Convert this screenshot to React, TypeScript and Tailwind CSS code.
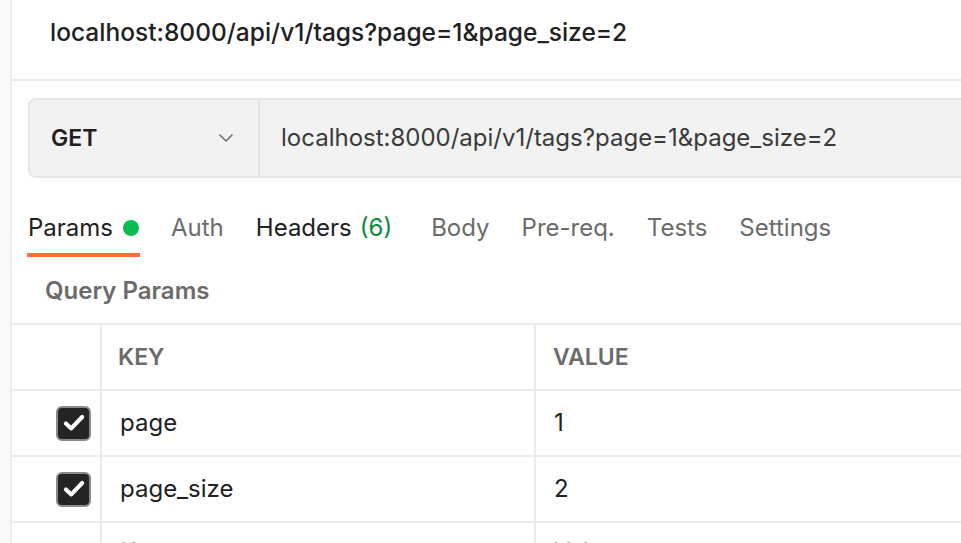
import { ChevronDown } from "lucide-react";

const tabs = [
  { label: "Params", active: true, dot: true },
  { label: "Auth" },
  { label: "Headers", count: "(6)", dark: true },
  { label: "Body" },
  { label: "Pre-req." },
  { label: "Tests" },
  { label: "Settings" },
];

const rows = [
  { key: "page", value: "1" },
  { key: "page_size", value: "2" },
];

function Check() {
  return (
    <div className="w-[35px] h-[35px] rounded-[6px] bg-[#242424] border-2 border-[#8a8a8a] flex items-center justify-center">
      <svg width="26" height="26" viewBox="0 0 24 24" fill="none">
        <path d="M4.5 12.5l5 4.5 10-10.5" stroke="#fff" strokeWidth="3.8" strokeLinecap="round" strokeLinejoin="round" />
      </svg>
    </div>
  );
}

function Row({ children }: { children: React.ReactNode }) {
  return <div className="flex h-[66px] shrink-0 border-b-2 border-[#ebebeb]">{children}</div>;
}

export default function App() {
  const url = "localhost:8000/api/v1/tags?page=1&page_size=2";

  return (
    <div className="h-[543px] w-[961px] overflow-hidden flex bg-white font-['Inter',sans-serif]">
      <div className="w-[12px] shrink-0 bg-[#f9f9f9] border-r-2 border-[#ececec]" />

      <div className="flex-1 min-w-0 flex flex-col">
        {/* Title */}
        <div className="h-[81px] shrink-0 border-b-2 border-[#ededed] flex items-center pl-[38px] pb-[14px]">
          <span className="text-[24.5px] font-medium text-[#212121] whitespace-nowrap">{url}</span>
        </div>

        {/* URL bar */}
        <div className="pl-[16px] pt-[17px] shrink-0">
          <div className="h-[80px] flex bg-[#f2f2f2] border-2 border-r-0 border-[#e6e6e6] rounded-l-[8px]">
            <div className="w-[230px] shrink-0 flex items-center justify-between pl-[21px] pr-[20px] border-r-2 border-[#e4e4e4]">
              <span className="text-[23px] font-semibold text-[#212121]">GET</span>
              <ChevronDown className="w-[24px] h-[24px] text-[#6b6b6b]" strokeWidth={1.5} />
            </div>
            <div className="flex items-center pl-[21px] text-[24px] text-[#3a3a3a] whitespace-nowrap">{url}</div>
          </div>
        </div>

        {/* Tabs */}
        <div className="flex items-start gap-[32px] pl-[16px] pt-[33px] shrink-0">
          {tabs.map((t) => (
            <div key={t.label} className="flex flex-col">
              <div className="flex items-center h-[34px] text-[24px] leading-none whitespace-nowrap">
                <span className={t.active || t.dark ? "text-[#212121]" : "text-[#6b6b6b]"}>{t.label}</span>
                {t.dot && <span className="ml-[10px] w-[16px] h-[16px] rounded-full bg-[#0cbb52]" />}
                {t.count && <span className="ml-[8px] mr-[7px] text-[#0c8a3c]">{t.count}</span>}
              </div>
              <div className={`h-[4px] mt-[8px] -mx-[1px] ${t.active ? "bg-[#ff6c37]" : ""}`} />
            </div>
          ))}
        </div>

        {/* Query params label */}
        <div className="h-[66px] shrink-0 flex items-center pl-[33px] pt-[1px] text-[24px] font-semibold text-[#6b6b6b]">
          Query Params
        </div>

        {/* Table */}
        <div className="border-t-2 border-[#ebebeb] flex flex-col">
          <Row>
            <div className="w-[90px] shrink-0 border-r-2 border-[#ebebeb]" />
            <div className="w-[434px] shrink-0 border-r-2 border-[#ebebeb] flex items-center pl-[16px] text-[23px] font-semibold text-[#6b6b6b]">
              KEY
            </div>
            <div className="flex-1 flex items-center pl-[17px] text-[23px] font-semibold text-[#6b6b6b]">VALUE</div>
          </Row>
          {rows.map((r) => (
            <Row key={r.key}>
              <div className="w-[90px] shrink-0 border-r-2 border-[#ebebeb] flex items-center justify-end pr-[9px]">
                <Check />
              </div>
              <div className="w-[434px] shrink-0 border-r-2 border-[#ebebeb] flex items-center pl-[18px] text-[24px] text-[#212121]">
                {r.key}
              </div>
              <div className="flex-1 flex items-center pl-[18px] text-[24px] text-[#212121]">{r.value}</div>
            </Row>
          ))}
          <Row>
            <div className="w-[90px] shrink-0 border-r-2 border-[#ebebeb]" />
            <div className="w-[434px] shrink-0 border-r-2 border-[#ebebeb] pl-[18px] pt-[17px] text-[24px] leading-none text-[#a6a6a6]">
              Key
            </div>
            <div className="flex-1 pl-[18px] pt-[17px] text-[24px] leading-none text-[#a6a6a6]">Value</div>
          </Row>
        </div>
      </div>
    </div>
  );
}
